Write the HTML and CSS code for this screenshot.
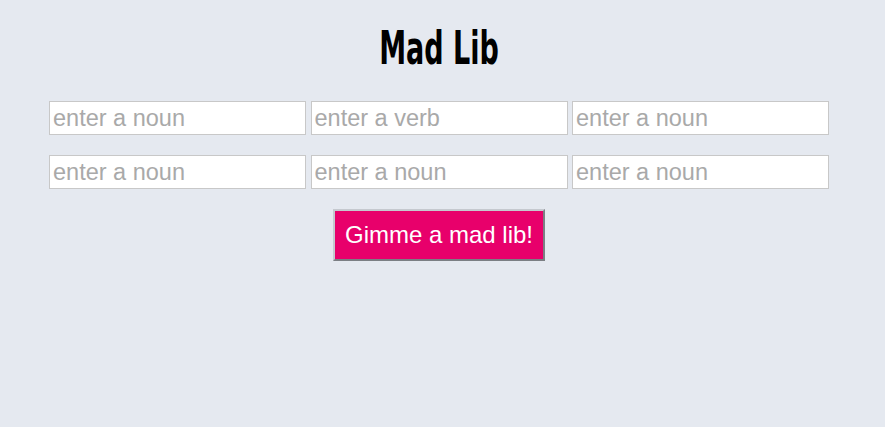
FILE: index.html
```html
<!DOCTYPE html>
<html>
<head>
<meta charset="utf-8">
<link rel="stylesheet" href="styles.css">
</head>
<body>
<main class="wrap">
  <h1 class="title">Mad Lib</h1>
  <div class="row">
    <input class="field" placeholder="enter a noun">
    <input class="field" placeholder="enter a verb">
    <input class="field" placeholder="enter a noun">
  </div>
  <div class="row">
    <input class="field" placeholder="enter a noun">
    <input class="field" placeholder="enter a noun">
    <input class="field" placeholder="enter a noun">
  </div>
  <div class="actions">
    <button class="go">Gimme a mad lib!</button>
  </div>
</main>
</body>
</html>
```
FILE: styles.css
```css
html, body {
  margin: 0;
  padding: 0;
  background: #e5e9f0;
}
.wrap {
  width: 780px;
  margin-left: 49px;
  padding-top: 21px;
  display: flex;
  flex-direction: column;
  gap: 20px;
}
.title {
  margin: 0 0 6px;
  text-align: center;
  font-family: "DejaVu Sans", sans-serif;
  font-weight: bold;
  font-size: 47px;
  line-height: 54px;
  color: #000;
  transform: scaleX(0.575);
}
.row {
  display: flex;
  gap: 4.5px;
}
.field {
  width: 257px;
  height: 34px;
  box-sizing: border-box;
  margin: 0;
  border: 1px solid #c8c8c8;
  background: #fff;
  padding: 0 3px;
  font-family: "Liberation Sans", Arial, sans-serif;
  font-size: 23.5px;
  color: #333;
  outline: none;
}
.field::placeholder {
  color: #a9a9a9;
}
.actions {
  display: flex;
  justify-content: center;
}
.go {
  width: 212px;
  height: 52px;
  box-sizing: border-box;
  margin: 0;
  padding: 0;
  background: #e8006b;
  color: #fff;
  font-family: "Liberation Sans", Arial, sans-serif;
  font-size: 24px;
  border: 2px solid;
  border-color: #c5c9cf #7b7f84 #7b7f84 #c5c9cf;
}
```
